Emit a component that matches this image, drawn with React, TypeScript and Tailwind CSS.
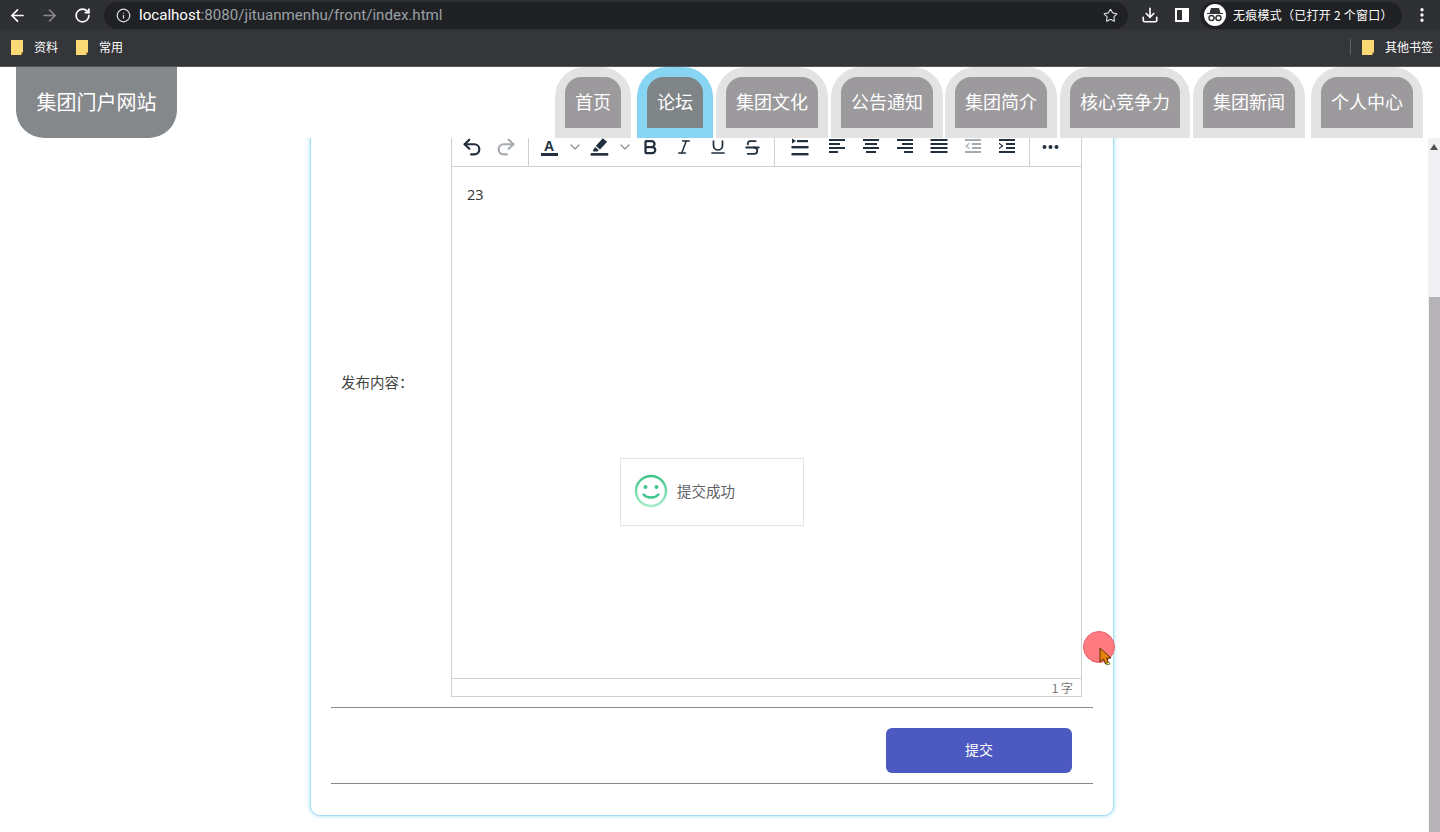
import {
  ArrowLeft,
  ArrowRight,
  Bold,
  ChevronDown,
  Download,
  EllipsisVertical,
  Info,
  Italic,
  Redo2,
  RotateCw,
  Star,
  Strikethrough,
  Underline,
  Undo2,
} from "lucide-react";

const cjk = "font-['Noto_Sans_CJK_SC','Noto_Sans',sans-serif]";

const navItems = [
  { label: "首页", gap: "ml-0", active: false },
  { label: "论坛", gap: "ml-[6px]", active: true },
  { label: "集团文化", gap: "ml-[3px]", active: false },
  { label: "公告通知", gap: "ml-[3px]", active: false },
  { label: "集团简介", gap: "ml-[2px]", active: false },
  { label: "核心竞争力", gap: "ml-[3px]", active: false },
  { label: "集团新闻", gap: "ml-[3px]", active: false },
  { label: "个人中心", gap: "ml-[6px]", active: false },
];

const Folder = () => (
  <svg width="13" height="15" viewBox="0 0 13 15">
    <path d="M0 0h12v12l-2 3H0z" fill="#fdd976" />
    <path d="M10 15v-3h2z" fill="#b8963c" />
  </svg>
);

const Bookmark = ({ label }: { label: string }) => (
  <div className="flex items-center gap-[10px]">
    <Folder />
    <span className="text-[12px] leading-none text-white">{label}</span>
  </div>
);

const BrowserBar = () => (
  <div className={`flex h-[67px] flex-col bg-[#353639] ${cjk}`}>
    <div className="flex h-[30px] items-center bg-[#2f3033]">
      <ArrowLeft size={19} strokeWidth={2.2} className="ml-[8px] text-white" />
      <ArrowRight size={19} strokeWidth={2} className="ml-[13px] text-[#8a8b8e]" />
      <RotateCw size={17} strokeWidth={2.4} className="ml-[15px] text-white" />
      <div className="ml-[13px] flex h-[27px] w-[1024px] items-center rounded-full bg-[#202124] pl-[12px] pr-[10px]">
        <Info size={15} className="text-[#dadce0]" />
        <span className="ml-[8px] font-['Roboto',sans-serif] text-[15.1px] text-white">
          localhost<span className="text-[#9aa0a6]">:8080/jituanmenhu/front/index.html</span>
        </span>
        <Star size={15} strokeWidth={1.8} className="ml-auto text-[#dadce0]" />
      </div>
      <Download size={18} strokeWidth={2.2} className="ml-[13px] text-white" />
      <div className="ml-[16px] flex h-[14px] w-[14px] justify-end border-2 border-white">
        <div className="h-full w-[5px] bg-white" />
      </div>
      <div className="ml-[11px] flex h-[27px] w-[202px] items-center rounded-full bg-[#202124] pl-[4px]">
        <div className="flex h-[22px] w-[22px] items-center justify-center rounded-full bg-white">
          <svg width="18" height="14" viewBox="0 0 18 14" fill="#333438">
            <path d="M5 0h8l1.500 5H17v1H1V5h2.500z" />
            <circle cx="5.500" cy="10" r="2.500" fill="none" stroke="#333438" strokeWidth="1.400" />
            <circle cx="12.500" cy="10" r="2.500" fill="none" stroke="#333438" strokeWidth="1.400" />
            <path d="M8 9.500h2v1H8z" />
          </svg>
        </div>
        <span className="ml-[7px] whitespace-nowrap text-[12px] leading-none tracking-[0.25px] text-white">
          无痕模式（已打开 2 个窗口）
        </span>
      </div>
      <EllipsisVertical size={18} strokeWidth={2.4} className="ml-[11px] text-white" />
    </div>
    <div className="flex h-[37px] items-center border-b border-[#55565a] pb-[2px] pl-[11px]">
      <Bookmark label="资料" />
      <div className="ml-[18px]">
        <Bookmark label="常用" />
      </div>
      <div className="ml-auto mr-[7px] flex items-center">
        <div className="mr-[11px] h-[16px] w-px bg-[#5f6064]" />
        <Bookmark label="其他书签" />
      </div>
    </div>
  </div>
);

const NavTab = ({ label, gap, active }: (typeof navItems)[number]) => (
  <div
    className={`${gap} h-[71px] rounded-t-[30px] p-[10px] ${active ? "bg-[#87d5f2]" : "bg-[#e3e3e3]"}`}
  >
    <div
      className={`flex h-[51px] items-center rounded-t-[16px] px-[10px] pb-[2px] text-[18px] text-white ${
        active ? "bg-[#7f8487]" : "bg-[#9c9a9c]"
      }`}
    >
      {label}
    </div>
  </div>
);

const Header = () => (
  <div className={`flex h-[71px] items-start pr-[17px] ${cjk}`}>
    <div className="ml-[16px] flex h-[71px] w-[161px] items-center justify-center rounded-b-[28px] bg-[#85888b] pb-[2px] text-[20px] text-white">
      集团门户网站
    </div>
    <div className="ml-auto flex">
      {navItems.map((item) => (
        <NavTab key={item.label} {...item} />
      ))}
    </div>
  </div>
);

const ToolBtn = ({ children, muted }: { children: React.ReactNode; muted?: boolean }) => (
  <div
    className={`flex h-[28px] w-[34px] items-center justify-center ${muted ? "text-[#a6abb0]" : "text-[#222f3e]"}`}
  >
    {children}
  </div>
);

const Caret = ({ narrow }: { narrow?: boolean }) => (
  <div className={`flex justify-center text-[#8f959b] ${narrow ? "w-[16px]" : "w-[17px]"}`}>
    <ChevronDown size={16} strokeWidth={2} />
  </div>
);

// 横线类图标: 每行 [x, y, w]
const LinesIcon = ({ rows, h = 2 }: { rows: number[][]; h?: number }) => (
  <svg width="20" height="20" viewBox="0 0 20 20" fill="currentColor">
    {rows.map(([x, y, w]) => (
      <rect key={`${x}-${y}`} x={x} y={y} width={w} height={h} />
    ))}
  </svg>
);

const Toolbar = () => (
  <div className="flex h-[40px] items-center border-b border-[#d0d0d0] pt-[1px]">
    <div className="flex h-full w-[77px] items-center border-r border-[#d0d0d0] pl-[3px]">
      <ToolBtn>
        <Undo2 size={22} strokeWidth={2.4} />
      </ToolBtn>
      <ToolBtn muted>
        <Redo2 size={22} strokeWidth={2.4} />
      </ToolBtn>
    </div>
    <div className="flex h-full w-[246px] items-center border-r border-[#d0d0d0] pl-[3px]">
      <ToolBtn>
        <div className="flex translate-y-[1px] flex-col items-center">
          <span className="font-['Liberation_Sans',sans-serif] text-[14px] font-bold leading-[12px]">A</span>
          <div className="mt-[1px] h-[3px] w-[17px] bg-[#222f3e]" />
        </div>
      </ToolBtn>
      <Caret />
      <ToolBtn>
        <svg width="22" height="22" viewBox="0 0 20 20" fill="currentColor">
          <path d="M12.500 2l4 3.200-6.500 7-3.800-3.200zM5.500 10l3.500 3-1.500 1.200H4l-.5-1z" />
          <rect x="1.500" y="15.500" width="16" height="2.400" />
        </svg>
      </ToolBtn>
      <Caret narrow />
      <ToolBtn>
        <Bold size={18} strokeWidth={3} />
      </ToolBtn>
      <ToolBtn>
        <Italic size={18} strokeWidth={2} />
      </ToolBtn>
      <ToolBtn>
        <Underline size={18} strokeWidth={2.3} />
      </ToolBtn>
      <ToolBtn>
        <Strikethrough size={19} strokeWidth={2.3} />
      </ToolBtn>
    </div>
    <div className="flex h-full w-[255px] items-center border-r border-[#d0d0d0] pl-[8px]">
      <ToolBtn>
        <svg width="20" height="20" viewBox="0 0 20 20" fill="currentColor">
          <path d="M2 1.500l4 2.500-4 2.500z" />
          <rect x="7" y="3" width="11" height="2.200" />
          <rect x="1.500" y="9" width="17" height="2.400" />
          <rect x="1.500" y="16" width="17" height="2.400" />
        </svg>
      </ToolBtn>
      <div className="ml-[3px]">
        <ToolBtn>
          <LinesIcon rows={[[2, 2, 16], [2, 6, 11], [2, 10, 16], [2, 14, 9]]} />
        </ToolBtn>
      </div>
      <ToolBtn>
        <LinesIcon rows={[[2, 2, 16], [4, 6, 12], [2, 10, 16], [5, 14, 10]]} />
      </ToolBtn>
      <ToolBtn>
        <LinesIcon rows={[[2, 2, 16], [7, 6, 11], [2, 10, 16], [9, 14, 9]]} />
      </ToolBtn>
      <ToolBtn>
        <LinesIcon rows={[[1.500, 2, 17], [1.500, 6, 17], [1.500, 10, 17], [1.500, 14, 17]]} />
      </ToolBtn>
      <ToolBtn muted>
        <svg width="20" height="20" viewBox="0 0 20 20" fill="currentColor">
          <rect x="2" y="2" width="16" height="2" />
          <rect x="9" y="6" width="9" height="2" />
          <rect x="9" y="10" width="9" height="2" />
          <rect x="2" y="14" width="16" height="2" />
          <path d="M6.500 5.500v1.500L4 8.900l2.500 1.900v1.500L2 8.900z" />
        </svg>
      </ToolBtn>
      <ToolBtn>
        <svg width="20" height="20" viewBox="0 0 20 20" fill="currentColor">
          <rect x="2" y="2" width="16" height="2" />
          <rect x="9" y="6" width="9" height="2" />
          <rect x="9" y="10" width="9" height="2" />
          <rect x="2" y="14" width="16" height="2" />
          <path d="M2 5.500v1.500l2.500 1.900L2 10.800v1.500l4.500-3.400z" />
        </svg>
      </ToolBtn>
    </div>
    <div className="flex h-full items-center pl-[3px]">
      <ToolBtn>
        <svg width="20" height="20" viewBox="0 0 20 20" fill="currentColor">
          <circle cx="4.500" cy="10" r="2" />
          <circle cx="10.500" cy="10" r="2" />
          <circle cx="16.500" cy="10" r="2" />
        </svg>
      </ToolBtn>
    </div>
  </div>
);

const Editor = () => (
  <div className="flex h-[570px] w-[631px] flex-col border border-[#d0d0d0] border-t-0 bg-white">
    <Toolbar />
    <div className="flex-1 px-[15px] py-[18px] font-['Open_Sans',sans-serif] text-[14.5px] leading-[20px] text-[#333]">
      23
    </div>
    <div className={`flex h-[18px] items-center justify-end border-t border-[#d0d0d0] pr-[8px] text-[12px] text-[#777] ${cjk}`}>
      1 字
    </div>
  </div>
);

const Card = () => (
  <div
    className={`-mt-[12px] ml-[310px] flex h-[690px] w-[804px] flex-col rounded-[10px] border border-[#a5def3] bg-white px-[20px] shadow-[0_0_4px_rgba(135,213,242,0.8)] ${cjk}`}
  >
    <div className="flex items-center">
      <div className="mb-[60px] w-[120px] pl-[10px] text-[14.5px] text-[#444]">发布内容：</div>
      <Editor />
    </div>
    <div className="mt-[10px] h-px bg-[#888]" />
    <div className="flex justify-end pb-[10px] pr-[21px] pt-[20px]">
      <button className="h-[45px] w-[186px] rounded-[6px] bg-[#4b59c0] pb-[2px] text-[14px] text-white">提交</button>
    </div>
    <div className="h-px bg-[#888]" />
  </div>
);

const Scrollbar = () => (
  <div className="flex w-[12px] flex-col bg-[#f1f0f2]">
    <div className="flex h-[159px] justify-center pt-[6px]">
      <svg width="8" height="6" viewBox="0 0 8 6" fill="#505050">
        <path d="M4 0l4 6H0z" />
      </svg>
    </div>
    <div className="ml-[1px] flex-1 bg-[#b5b3b5]" />
  </div>
);

const Toast = () => (
  <div
    className={`absolute left-[620px] top-[458px] flex h-[68px] w-[184px] items-center border border-[#e2e2e2] bg-white pb-[2px] pl-[13px] ${cjk}`}
  >
    <svg width="34" height="34" viewBox="0 0 34 34" fill="none">
      <defs>
        <linearGradient id="smile" x1="0" y1="0" x2="0" y2="1">
          <stop offset="0" stopColor="#3dc68d" />
          <stop offset="1" stopColor="#a5ecc9" />
        </linearGradient>
      </defs>
      <circle cx="17" cy="17" r="15" stroke="url(#smile)" strokeWidth="2.400" />
      <circle cx="11.500" cy="13" r="2" fill="#3dc68d" />
      <circle cx="22.500" cy="13" r="2" fill="#3dc68d" />
      <path d="M9.500 20.500c3.500 4 11.500 4 15 0" stroke="#3dc68d" strokeWidth="2.400" strokeLinecap="round" />
    </svg>
    <span className="ml-[9px] text-[14.5px] text-[#606266]">提交成功</span>
  </div>
);

const CursorMark = () => (
  <div className="absolute left-[1083px] top-[631px] h-[32px] w-[32px] rounded-full border border-[#e8626a] bg-[#ff7a80]">
    <svg className="absolute left-[15px] top-[15px]" width="16" height="20" viewBox="0 0 16 20">
      <path d="M1 1v14l3.500-3 2 5 3-1-2-5h4.500z" fill="#e8820c" stroke="#5a3300" strokeWidth="1" />
      <path d="M7 16l3-1 1 2-3 1z" fill="#f5f05a" stroke="#333" strokeWidth="0.600" />
    </svg>
  </div>
);

export default function App() {
  return (
    <div className="relative flex h-[832px] flex-col overflow-hidden bg-white">
      <BrowserBar />
      <Header />
      <div className="flex min-h-0 flex-1">
        <div className="min-w-0 flex-1 overflow-hidden">
          <Card />
        </div>
        <Scrollbar />
      </div>
      <Toast />
      <CursorMark />
    </div>
  );
}
